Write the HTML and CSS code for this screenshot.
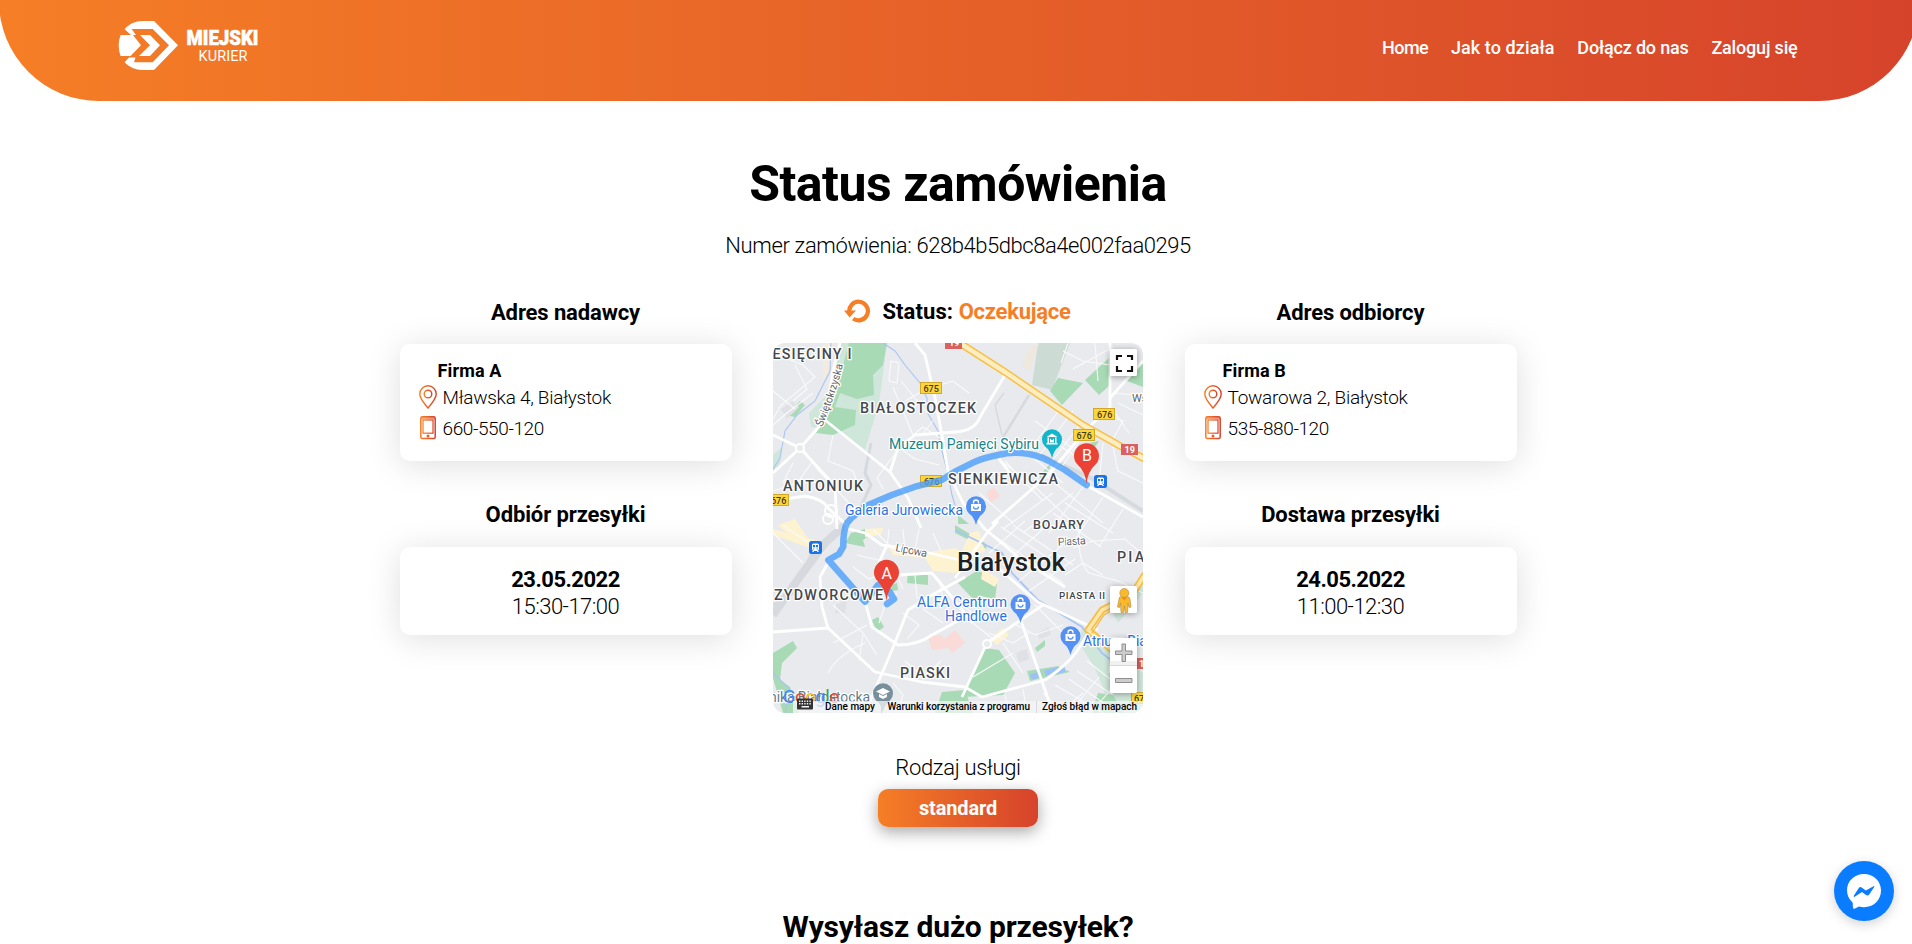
FILE: index.html
```html
<!DOCTYPE html>
<html lang="pl">
<head>
<meta charset="utf-8">
<title>Miejski Kurier – Status zamówienia</title>
<link rel="stylesheet" href="styles.css">
</head>
<body>
<svg class="defs" width="0" height="0" aria-hidden="true">
  <defs>
    <linearGradient id="brand" x1="0" y1="0" x2="1" y2="0"><stop offset="0" stop-color="#f57e26"/><stop offset="1" stop-color="#d6432b"/></linearGradient>
    <symbol id="i-pin" viewBox="0 0 18 24"><g fill="none" stroke="url(#brand)" stroke-width="1.4"><path d="M9 23 C7 20.5 .8 14 .8 9 A8.2 8.2 0 0 1 17.2 9 C17.2 14 11 20.5 9 23Z"/><circle cx="9" cy="9" r="3.8"/></g></symbol>
    <symbol id="i-phone" viewBox="0 0 18 24"><g fill="none" stroke="url(#brand)"><rect x="1.8" y=".8" width="14.4" height="21.8" rx="1.6" stroke-width="1.5"/><rect x="4" y="4" width="10" height="13.2" stroke-width="1.2"/></g><path d="M2 1h14v2.4H2z" fill="url(#brand)" opacity=".6"/><circle cx="9" cy="20" r="1.5" fill="#e8602a"/></symbol>
  </defs>
</svg>

<header class="header">
  <svg class="logo" viewBox="0 0 140 50">
    <g fill="#fff">
      <path d="M6.6 9.3 C11 3.8 18 1 24 1 H36 L60 25.3 L36 50 H24 C18 50 11 47.2 6.6 42.3 L11 37.6 L17.5 37.6 L16 42.3 H34.7 L51 25.3 L34.7 9 H13.6 L18 15 H13 Z"/>
      <path d="M13.6 15 H32 L42 25.3 L32 36 H21 L32 25.3 L22 15 Z"/>
      <path d="M2.6 15 H15 L23 25.3 L12.5 36 H2.6 Q-1.4 25.3 2.6 15 Z"/>
      <text class="logo-main" x="68.5" y="25" textLength="72" lengthAdjust="spacingAndGlyphs">MIEJSKI</text>
      <text class="logo-sub" x="80.5" y="41" textLength="49">KURIER</text>
    </g>
  </svg>
  <nav class="nav">
    <a class="nav-home">Home</a><a class="nav-how">Jak to działa</a><a>Dołącz do nas</a><a>Zaloguj się</a>
  </nav>
</header>

<main class="main">
  <h1 class="title">Status zamówienia</h1>
  <p class="number">Numer zamówienia: <span class="number-id">628b4b5dbc8a4e002faa0295</span></p>

  <div class="columns">
    <section class="side">
      <h2 class="heading">Adres nadawcy</h2>
      <div class="card address">
        <div class="company">Firma A</div>
        <div class="row"><svg class="icon"><use href="#i-pin"/></svg><span>Mławska 4, Białystok</span></div>
        <div class="row phone"><svg class="icon"><use href="#i-phone"/></svg><span>660-550-120</span></div>
      </div>
      <h2 class="heading second">Odbiór przesyłki</h2>
      <div class="card slot"><div class="date">23.05.2022</div><div class="time">15:30-17:00</div></div>
    </section>

    <section class="center">
      <div class="status">
        <svg class="reload" viewBox="0 0 26 24"><path d="M5.4 13.6 A9.3 9.3 0 1 1 9.2 19.6" fill="none" stroke="#f57e26" stroke-width="4.2"/><path d="M0 11.5 H12 L5.6 18.4 Z" fill="#f57e26"/></svg>
        <span class="status-label">Status:</span><span class="status-value">Oczekujące</span>
      </div>
      <svg class="map" viewBox="0 0 370 370">
        <rect width="370" height="370" fill="#e8eaed"/>
        <g fill="#cfe6da">
          <path d="M68 0H114L106 60L92 107L68 88L38 84L36 70L58 48L62 20Z"/><path d="M0 112L9 104L6 126L0 130Z"/>
          <path d="M309 284L335 305L370 330V370H340L322 325L306 300Z"/><path d="M335 260L362 243L370 240V250L345 280Z"/>
        </g>
        <path d="M265 0H297L279 47L259 42Z" fill="#ccdcd5"/>
        <g fill="#a8dab5">
          <path d="M76 0H114L110 22L100 32L101 52L84 56L67 50L62 64L83 67L82 82L73 86L60 92L43 90L52 75L60 50L68 30Z"/>
          <path d="M12 72L27 58L32 62L22 74Z"/><path d="M285 35L310 40L289 62L277 48Z"/><path d="M337 14V42L326 52L312 37Z"/><path d="M370 20V44L354 38Z"/>
          <path d="M78 190L92 186L97 192L90 197L92 204L72 200Z"/><path d="M135 230L155 232V242L134 240Z"/><path d="M99 277L105 274L111 284L104 289Z"/>
          <path d="M0 310L20 298L24 305L9 320L7 337L17 344L26 370H10L2 342L0 335Z"/><path d="M169 349L192 347L200 370H162Z"/>
          <path d="M185 240L205 227L224 240L222 257L209 253L200 256Z"/><path d="M212 305L226 307L242 330L230 352L189 354Z"/><path d="M254 328L285 323L297 329L257 338Z"/>
          <path d="M182 182L212 200L214 206L182 190Z"/><path d="M267 132L278 120L276 128L268 138Z"/><path d="M316 100L326 98L322 104Z"/><path d="M262 305L272 297V303L264 309Z"/><path d="M118 242L124 240L125 247L119 248Z"/>
          <path d="M185 172L196 181H185Z"/><path d="M325 350L340 352L350 370H318Z"/>
        </g>
        <g fill="#fef3d0">
          <path d="M5 182L22 176L35 196L28 202Z"/><path d="M0 186L14 190L42 197L40 206L12 196L0 192Z"/><path d="M114 201L150 210L182 205L198 214L182 230L160 228L152 215L120 212Z"/><path d="M92 186L110 185L108 192L92 194Z"/><path d="M197 190L206 188L212 208L200 214L186 220L190 205Z"/><path d="M217 296L224 302L236 292L230 285Z"/><path d="M210 226L226 236L222 244L208 236Z"/><path d="M50 0H60L56 30L50 38Z" fill="#f3ebdf"/><path d="M255 6L266 0L257 28L249 24Z" fill="#eee8df"/>
        </g>
        <g fill="#fadbd8"><path d="M155 294L168 292L171 296L182 287L192 300L179 310L176 305L159 307Z"/><path d="M213 150L221 144L227 153L218 160Z"/></g>
        <g fill="#dfe1e5"><path d="M63 262L74 256L72 270L62 270Z"/><path d="M8 66L20 58L26 64L14 76Z"/><path d="M243 310L254 306L256 316L246 320Z"/><path d="M265 290L276 284L278 292L266 296Z"/></g>
        <g fill="none" stroke="#d6d9dd"><path d="M74 180L52 200L28 232L0 272" stroke-width="8"/><path d="M98 100L92 130L98 142L82 176" stroke-width="3"/><path d="M40 208L20 250L0 262" stroke-width="3"/><path d="M256 52L229 96" stroke-width="2.500"/><path d="M268 112L320 136L370 168" stroke-width="4"/><path d="M231 50L222 62L229 92" stroke-width="1.4"/></g>
        <g fill="none" stroke="#a9c5f5" stroke-width="1.1">
          <path d="M58 0L57 28L42 58L24 72L12 88L7 115L0 126"/><path d="M110 0L122 8L132 22L147 40L154 55V69L165 88L169 108L175 132L179 152L185 172"/><path d="M182 187L229 210L239 230L265 257L309 284L329 310L362 336" stroke-width="1.800"/><path d="M0 330L16 345L12 370"/>
        </g>
        <path d="M258 334L268 331M272 330L292 326" stroke="#9cc0f9" stroke-width="6"/>
        <g class="minor">
          <path d="M0 10L30 22L42 34L8 62L0 76M22 22L34 46L20 58M0 82L14 70L40 50M0 48L22 66"/>
          <path d="M32 108L44 126L76 160M60 92L55 118L80 128L86 145M20 120L10 140M40 118L24 140L0 148"/>
          <path d="M118 18L126 20L124 40L116 38ZM128 38L154 70L170 66M120 44L140 92L150 84L172 98M132 58L150 48M125 104L142 116L166 122M124 108L104 135L110 146"/>
          <path d="M160 44L180 38L196 50M150 90L160 78"/>
          <path d="M290 8L310 18L337 22M295 0L288 20M300 26L340 4M322 0L325 38M340 50L366 52M345 60L370 72M330 70L350 78L340 96M338 64L356 90M316 84L286 128M300 68L262 118M290 62L256 108M310 78L276 122"/>
          <path d="M262 78L298 104M270 92L310 118M248 104L290 140M228 118L260 142L300 180M232 118L270 158M206 150L240 180M222 178L264 142M230 186L280 150M250 190L300 150M270 130L330 180M330 100L326 140M340 104L345 128L370 140"/>
          <path d="M292 160L340 190M280 170L328 204M310 144L276 190M330 154L300 200M350 166L326 204"/>
          <path d="M0 190L30 220M10 182L50 210M60 262L90 290L104 312M90 292L86 318M60 300L94 282M55 330Q64 312 92 300M106 280L112 262L124 250M132 318L150 334L168 318M130 270L146 282L134 296M150 266L170 280M120 340L130 352L124 370"/>
          <path d="M80 224L96 236L110 230M84 212L118 220M100 186L120 206M116 186L114 206M130 186L132 208M146 186L142 206M160 190L168 208M120 224L130 246M142 232L144 256M166 236L170 258"/>
          <path d="M208 184L290 240M228 184L292 226M240 182L300 222M216 210L252 178M230 222L270 186M246 238L292 200M256 248L302 216M306 184Q304 218 316 230L345 238L370 250"/>
          <path d="M300 205L320 198L352 196L368 210M292 232L310 220L330 232M262 262L300 300M240 280L262 292L290 282M230 300L250 330M216 290L240 300L256 290M200 280L220 296M190 262L208 278"/>
          <path d="M282 342L330 370M296 336L345 370M304 328L340 352M314 318L350 346M270 350L290 370M310 350L286 370M326 334L296 370M338 346L318 370M250 346L254 370M232 352L236 370M340 300L336 330M200 334L240 310"/>
        </g>
        <g class="major">
          <path d="M67 0L60 28L52 77L27 105L0 130"/><path d="M52 77L117 129L135 155L148 185"/><path d="M0 92L27 105L62 143L64 186"/><path d="M142 0L152 12L162 55L169 92L175 129L190 160L212 186"/>
          <path d="M117 129L125 105L142 92L182 89Q202 88 207 74L232 32"/><path d="M0 158L32 153Q50 156 55 165L76 184"/><path d="M337 0V64L315 85L275 132L219 181"/><path d="M313 142L370 174"/><path d="M370 18L337 55"/><path d="M231 108L226 116L240 134"/>
          <path d="M0 289L55 285L102 329L149 339L192 344L209 354L272 337Q300 318 309 300L322 280"/><path d="M92 259L99 284L125 302Q145 302 159 292L192 274"/><path d="M192 234L159 252L135 267L119 307L92 370"/><path d="M55 220L47 234L49 264L55 285"/><path d="M72 185L92 190L109 202L152 209L200 220"/><path d="M125 232L159 230L200 280"/><path d="M189 354L214 300L270 262"/><path d="M246 272L280 370"/><path d="M225 225L265 259L325 287"/><path d="M182 235L214 190L225 178M212 186L249 217L292 244"/><path d="M114 202L104 224"/>
        </g>
        <circle cx="27" cy="105" r="4" fill="#e8eaed" stroke="#fff" stroke-width="2"/><circle cx="58" cy="168" r="6" fill="none" stroke="#fff" stroke-width="2"/><circle cx="55" cy="176" r="5" fill="none" stroke="#fff" stroke-width="2"/><circle cx="214" cy="301" r="4" fill="#e8eaed" stroke="#fff" stroke-width="2"/>
        <g fill="none" stroke-linejoin="round">
          <path d="M182 -3L232 29L310 82L349 104L372 116" stroke="#f8bf45" stroke-width="7.5"/><path d="M182 -3L232 29L310 82L349 104L372 116" stroke="#feedc0" stroke-width="4.500"/>
          <path d="M372 231L359 252L329 267L315 287L345 312" stroke="#f8bf45" stroke-width="7"/><path d="M372 231L359 252L329 267L315 287L345 312" stroke="#fde7ac" stroke-width="3.4"/><path d="M356 257L331 272L319 290" stroke="#f6b53a" stroke-width="1.2"/>
        </g>
        <g class="shield">
          <rect x="147.5" y="39.5" width="21" height="11"/><rect x="147.5" y="132.500" width="21" height="11"/><rect x="-6" y="151.500" width="21.500" height="11"/><rect x="320.500" y="65.500" width="21" height="11"/><rect x="300.500" y="86.500" width="21" height="11"/><rect x="358.500" y="349.500" width="21" height="11"/>
        </g>
        <g class="shield-text">
          <text x="150.500" y="48.500">675</text><text x="151" y="141.500">676</text><text x="-2" y="160.500">676</text><text x="324" y="74.500">676</text><text x="303.500" y="95.500">676</text><text x="361" y="358.500">67</text>
        </g>
        <g fill="#d9615f"><rect x="172" y="-5" width="17" height="11"/><rect x="348" y="101" width="17" height="11"/><rect x="363" y="315" width="17" height="11"/></g>
        <g class="shield-red"><text x="176" y="3">19</text><text x="351.500" y="110">19</text><text x="366" y="324">19</text></g>

        <path class="route" d="M313.700 142L292 127L275 117.500Q262 111 248.700 110Q236 109 225 112Q212 114.500 202 118.700L182 128.700L168.700 137L142 143.700L118.700 152L95.300 162Q82 170 74 180Q70 188 70.300 203.700L66 211L55.300 217L92 258.700L105 242L116 248L121 256L114 261"/>

        <g class="area">
          <text x="-.500" y="16" textLength="79">ESIĘCINY I</text><text x="87" y="70" textLength="116">BIAŁOSTOCZEK</text><text x="10" y="148" textLength="80">ANTONIUK</text><text x="175" y="141" textLength="110">SIENKIEWICZA</text>
          <text x="1" y="257" textLength="109">ZYDWORCOWE</text><text x="127" y="335" textLength="50">PIASKI</text><text class="a13" x="260" y="186" textLength="51">BOJARY</text><text x="344" y="219" textLength="38">PIAS</text><text class="a10" x="286" y="256" textLength="46">PIASTA II</text>
        </g>
        <text class="city" x="184" y="228" textLength="108">Białystok</text>
        <g class="street"><path id="st" d="M49 84Q61 57 70 22" fill="none" stroke="none"/><text><textPath href="#st" textLength="66">Świętokrzyska</textPath></text><text x="285" y="202" textLength="28" transform="rotate(-3 299 200)">Piasta</text><text x="122" y="208" textLength="32" transform="rotate(11 122 208)">Lipowa</text><text x="359" y="59">Wsch</text></g>
        <g class="poi">
          <text class="teal" x="116" y="106" textLength="150">Muzeum Pamięci Sybiru</text><text x="72" y="172" textLength="118">Galeria Jurowiecka</text><text x="144" y="264" textLength="90">ALFA Centrum</text><text x="172" y="278" textLength="62">Handlowe</text><text x="310" y="303" textLength="75">Atrium Biała</text><text class="gray" x="-4" y="359" textLength="101">nika Białostocka</text>
        </g>

        <g transform="translate(279 96)"><path d="M0 19Q-2 11 -7 7.500A10 10 0 1 1 7 7.500Q2 11 0 19Z" fill="#12b5cb"/><path d="M-5.500 -2L0 -5.500L5.500 -2ZM-5.500 4H5.500V5.500H-5.500ZM-4.500 -1.500H-3V4H-4.500ZM3 -1.500H4.500V4H3ZM-2 3.500V-.5L0 1.500L2 -.5V3.500" fill="#fff"/></g>
        <g>
          <g transform="translate(203 163)"><path class="bagpin" d="M0 19Q-2 11 -7 7.500A10 10 0 1 1 7 7.500Q2 11 0 19Z"/><path class="bag" d="M-5-2H5V5H-5Z"/><path class="bagline" d="M-2.500-2.500V-3.500A2.500 2.500 0 0 1 2.500-3.500V-2.500"/><path class="bagsmile" d="M-2.500 .5A2.500 2.500 0 0 0 2.500 .5"/></g>
          <g transform="translate(247.500 261)"><path class="bagpin" d="M0 19Q-2 11 -7 7.500A10 10 0 1 1 7 7.500Q2 11 0 19Z"/><path class="bag" d="M-5-2H5V5H-5Z"/><path class="bagline" d="M-2.500-2.500V-3.500A2.500 2.500 0 0 1 2.500-3.500V-2.500"/><path class="bagsmile" d="M-2.500 .5A2.500 2.500 0 0 0 2.500 .5"/></g>
          <g transform="translate(297.500 293)"><path class="bagpin" d="M0 19Q-2 11 -7 7.500A10 10 0 1 1 7 7.500Q2 11 0 19Z"/><path class="bag" d="M-5-2H5V5H-5Z"/><path class="bagline" d="M-2.500-2.500V-3.500A2.500 2.500 0 0 1 2.500-3.500V-2.500"/><path class="bagsmile" d="M-2.500 .5A2.500 2.500 0 0 0 2.500 .5"/></g>
        </g>
        <g transform="translate(110 350)"><path d="M0 19Q-2 11 -7 7.500A10 10 0 1 1 7 7.500Q2 11 0 19Z" fill="#78909c"/><path d="M-7-1.500L0-5L7-1.500L0 2ZM-4 1L0 3L4 1V4L0 6L-4 4Z" fill="#fff"/></g>
        <g transform="translate(321 132)"><rect width="13" height="13" rx="2.500" fill="#1a73e8"/><path d="M3 4Q3 2.500 4.500 2.500H8.500Q10 2.500 10 4V8.500L9 9.500L10 11H8.500L8 10H5L4.500 11H3L4 9.500L3 8.500Z" fill="#fff"/><path d="M4 4H6.100V6.200H4ZM6.900 4H9V6.200H6.900ZM4.200 7.500H5.300V8.600H4.200ZM7.700 7.500H8.800V8.600H7.700Z" fill="#1a73e8"/></g>
        <g transform="translate(36 198)"><rect width="13" height="13" rx="2.500" fill="#1a73e8"/><path d="M3 4Q3 2.500 4.500 2.500H8.500Q10 2.500 10 4V8.500L9 9.500L10 11H8.500L8 10H5L4.500 11H3L4 9.500L3 8.500Z" fill="#fff"/><path d="M4 4H6.100V6.200H4ZM6.900 4H9V6.200H6.900ZM4.200 7.500H5.300V8.600H4.200ZM7.700 7.500H8.800V8.600H7.700Z" fill="#1a73e8"/></g>

        <g class="marker"><path d="M313.500 140.500Q312 128 304.500 121.500A12.500 12.500 0 1 1 322.500 121.500Q315 128 313.500 140.500Z"/><text x="314" y="118">B</text></g>
        <g class="marker"><path d="M113.500 257.500Q112 246 104.500 238A12.500 12.500 0 1 1 122.500 238Q115 246 113.500 257.500Z"/><text x="113.800" y="235.500">A</text></g>

        <text class="google" x="10" y="360" textLength="56"><tspan fill="#4285f4">G</tspan><tspan fill="#ea4335">o</tspan><tspan fill="#fbbc04">o</tspan><tspan fill="#4285f4">g</tspan><tspan fill="#34a853">l</tspan><tspan fill="#ea4335">e</tspan></text>
        <path d="M20 358H370V370H20Z" fill="#f5f5f5" opacity=".75"/>
        <g><rect x="24" y="355.500" width="16" height="11" rx="1" fill="#333"/><path d="M26 358.200H38.500M26 360.800H38.500" stroke="#f5f5f5" stroke-width="1.400" stroke-dasharray="1.400 1.200"/><path d="M28.500 363.800H36" stroke="#f5f5f5" stroke-width="1.400"/></g>
        <path d="M108.500 358V370M263.500 358V370" stroke="#d8dadd"/>
        <g class="legal"><text x="52" y="366.500" textLength="50">Dane mapy</text><text x="114.500" y="366.500" textLength="142.500">Warunki korzystania z programu</text><text x="269" y="366.500" textLength="95">Zgłoś błąd w mapach</text></g>

        <g class="ctrl"><rect x="337" y="6" width="27" height="27" rx="1.500"/><rect x="337" y="243" width="27" height="27" rx="1.500"/><rect x="337" y="295" width="27" height="55" rx="1.500"/></g>
        <path d="M337 322.500H364" stroke="#d8d8d8"/><path d="M337 318H364V322H337Z" fill="#f1f1f1"/>
        <path d="M344 17V13H349M354 13H359V17M359 23V28H354M349 28H344V23" fill="none" stroke="#111" stroke-width="2.200"/>
        <path d="M349 301H352.500V308H359V311.500H352.500V318.500H349V311.500H342.500V308H349ZM342.500 335.500H359V339.500H342.500Z" fill="#ccc" stroke="#858585" stroke-width=".9"/>
        <g fill="#fbb929" stroke="#a98a4a" stroke-width=".6"><path d="M346 256Q346 253.500 348.500 253.500H354Q356.500 253.500 357 256L358 264L356 264.500L355 260L354.500 269.500H352L351.500 263L350.500 269.500H348L347.500 260L346.500 264.500L344.500 264Z"/><circle cx="351.300" cy="250" r="4.500"/><path d="M348.500 254H354L351.300 257.500Z" fill="#e98b2a" stroke="none"/></g>
      </svg>
      <p class="service">Rodzaj usługi</p>
      <div class="badge">standard</div>
    </section>

    <section class="side">
      <h2 class="heading">Adres odbiorcy</h2>
      <div class="card address">
        <div class="company">Firma B</div>
        <div class="row"><svg class="icon"><use href="#i-pin"/></svg><span>Towarowa 2, Białystok</span></div>
        <div class="row phone"><svg class="icon"><use href="#i-phone"/></svg><span>535-880-120</span></div>
      </div>
      <h2 class="heading second">Dostawa przesyłki</h2>
      <div class="card slot"><div class="date">24.05.2022</div><div class="time">11:00-12:30</div></div>
    </section>
  </div>

  <h2 class="more">Wysyłasz dużo przesyłek?</h2>
</main>

<div class="messenger">
  <svg viewBox="0 0 60 60" width="60" height="60"><path d="M30 13C20.500 13 13 20 13 29.300C13 34.200 15 38.300 18.300 41.200C18.900 41.800 18.700 42.500 19 46.500C19 47.600 20 48 21 47.500L25 45.500C26.500 46 28.300 46.200 30 46.200C39.500 46.200 47 39 47 29.500S39.500 13 30 13Z" fill="#fff"/><path d="M19.800 34.800L24.800 27Q26 25.300 28 26.700L31.800 29.500L39.500 25.200Q41 24.600 40.200 26L35.200 33.500Q34 35.200 32 34L28 31L20.700 35.800Q19.300 36.300 19.800 34.800Z" fill="#0a7cff"/></svg>
</div>
</body>
</html>
```
FILE: styles.css
```css
* { box-sizing: border-box; margin: 0; padding: 0; }
html { overflow: hidden; }
body { height: 944px; overflow: hidden; background: #fff; color: #000; font-family: Roboto, "Liberation Sans", sans-serif; }
.defs { position: absolute; }

.header {
  width: 1920px; height: 101px; margin-left: -1px; padding: 0 121.500px 0 119px;
  display: flex; justify-content: space-between; align-items: flex-start;
  background: linear-gradient(90deg, #f57e26, #d6432b);
  border-radius: 0 0 100px 100px;
}
.logo { width: 140px; height: 50px; margin-top: 20px; overflow: visible; }
.logo-main { font-size: 21px; font-weight: 900; stroke: #fff; stroke-width: 0.600px; }
.logo-sub { font-size: 14.500px; font-weight: 400; }
.nav { display: flex; gap: 22.800px; margin-top: 37px; color: #fff; font-size: 18px; font-weight: 500; line-height: 22px; letter-spacing: -0.180px; white-space: nowrap; }
.nav-home { letter-spacing: -0.550px; }
.nav-how { letter-spacing: 0.090px; }

.main { width: 1916px; padding-top: 53px; text-align: center; }
.title { font-size: 50px; line-height: 60px; font-weight: 700; letter-spacing: -0.500px; }
.number { margin-top: 19px; font-size: 22px; line-height: 26px; letter-spacing: -0.340px; font-weight: 350; }
.number-id { font-weight: 300; letter-spacing: -0.450px; }

.columns { display: grid; grid-template-columns: 332px 370px 332px; column-gap: 41.500px; justify-content: center; margin-top: 39px; }
.side { padding-top: 1.500px; }
.heading { font-size: 22px; line-height: 26px; font-weight: 700; letter-spacing: -0.120px; }
.second { margin-top: 41px; }
.card { margin-top: 18.500px; background: #fff; border-radius: 10px; box-shadow: 0 4px 34px rgba(0, 0, 0, .13); }
.address { height: 117px; padding: 16px 19px 0; text-align: left; }
.company { padding-left: 19px; font-size: 18px; line-height: 22px; font-weight: 700; letter-spacing: 0.150px; }
.row { display: flex; align-items: center; gap: 6px; height: 31px; margin-top: -0.500px; margin-bottom: 0.500px; font-size: 19px; font-weight: 350; letter-spacing: -0.280px; }
.phone { letter-spacing: -0.400px; }
.icon { width: 18px; height: 24px; margin-top: -1px; }
.slot { height: 88px; padding-top: 19px; font-size: 22px; line-height: 27px; }
.date { font-weight: 700; letter-spacing: -0.520px; }
.time { font-weight: 300; letter-spacing: -0.520px; }

.center { display: flex; flex-direction: column; align-items: center; }
.status { display: flex; align-items: center; height: 26px; font-size: 22px; font-weight: 700; line-height: 25px; }
.reload { width: 26px; height: 24px; margin-left: -1px; margin-right: 12px; }
.status-label { margin-right: 5.500px; letter-spacing: 0.100px; }
.status-value { color: #f57e26; letter-spacing: -0.250px; }
.map { display: block; width: 370px; height: 370px; margin-top: 19px; border-radius: 12px; overflow: hidden; }
.service { margin-top: 42px; font-size: 22px; line-height: 26px; font-weight: 350; letter-spacing: -0.320px; }
.badge { width: 160px; height: 38px; margin-top: 8px; border-radius: 10px; background: linear-gradient(90deg, #f57e26, #d6432b); box-shadow: 0 5px 16px rgba(0, 0, 0, .35); color: #fff; font-size: 20px; font-weight: 700; line-height: 39px; letter-spacing: -0.150px; }
.more { margin-top: 81px; font-size: 30px; line-height: 37px; letter-spacing: -0.140px; }

.minor { fill: none; stroke: #f9fafb; stroke-width: 1.100px; }
.major { fill: none; stroke: #fff; stroke-width: 2.800px; stroke-linejoin: round; }
.route { fill: none; stroke: #4ea0fb; stroke-opacity: .82; stroke-width: 6.500px; stroke-linejoin: round; stroke-linecap: round; }
.shield { fill: #fcd53a; stroke: #cfa92c; }
.shield-text { font-size: 9px; font-weight: 500; fill: #3c3a20; }
.shield-red { font-size: 9px; font-weight: 700; fill: #fff; }
.area, .city, .street, .poi { paint-order: stroke; stroke: #fff; stroke-width: 2.500px; stroke-linejoin: round; }
.area { font-size: 14.300px; font-weight: 500; fill: #45484d; }
.a13 { font-size: 12.500px; }
.a10 { font-size: 9.800px; }
.city { font-size: 26px; font-weight: 500; fill: #202124; stroke-width: 1.800px; }
.street { font-size: 11px; fill: #5f6368; }
.poi { font-size: 14px; fill: #2b72e0; }
.teal { fill: #12858d; }
.gray { fill: #607d8b; }
.bagpin { fill: #5491f5; }
.bag { fill: #fff; }
.bagline { fill: none; stroke: #fff; stroke-width: 1.300px; }
.bagsmile { fill: none; stroke: #5491f5; stroke-width: 1.300px; }
.marker { fill: #ea4335; }
.marker text { fill: #fff; font-size: 16px; text-anchor: middle; }
.google { font-size: 18.500px; font-weight: 400; }
.legal { font-size: 10px; font-weight: 500; fill: #000; }
.ctrl { fill: #fff; filter: drop-shadow(0 1px 3px rgba(0, 0, 0, .35)); }

.messenger { position: fixed; left: 1834px; top: 861px; width: 60px; height: 60px; border-radius: 50%; background: #0a7cff; box-shadow: 0 3px 12px rgba(0, 0, 0, .18); }
```
